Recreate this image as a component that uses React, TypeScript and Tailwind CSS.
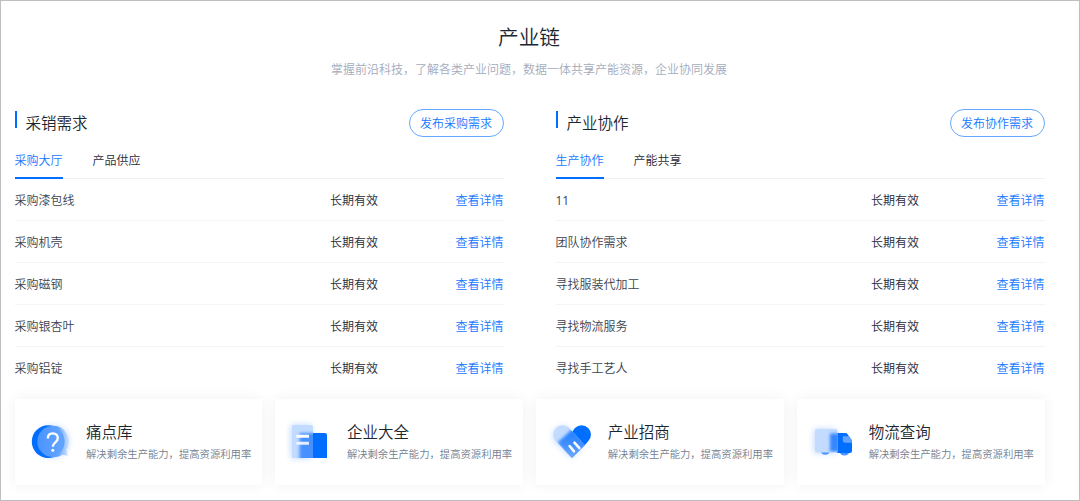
import clsx from "clsx";
import type { ReactNode } from "react";

interface Demand {
  title: string;
  validity: string;
}

interface DemandPanelProps {
  title: string;
  action: string;
  tabs: string[];
  rows: Demand[];
}

interface ServiceCardProps {
  title: string;
  icon: ReactNode;
}

const purchaseRows: Demand[] = [
  { title: "采购漆包线", validity: "长期有效" },
  { title: "采购机壳", validity: "长期有效" },
  { title: "采购磁钢", validity: "长期有效" },
  { title: "采购银杏叶", validity: "长期有效" },
  { title: "采购铝锭", validity: "长期有效" },
];

const cooperationRows: Demand[] = [
  { title: "11", validity: "长期有效" },
  { title: "团队协作需求", validity: "长期有效" },
  { title: "寻找服装代加工", validity: "长期有效" },
  { title: "寻找物流服务", validity: "长期有效" },
  { title: "寻找手工艺人", validity: "长期有效" },
];

function QuestionIcon() {
  return (
    <svg width="48" height="48" viewBox="0 0 48 48" className="shrink-0">
      <defs>
        <filter id="q-glow" x="-40%" y="-40%" width="180%" height="180%">
          <feGaussianBlur stdDeviation="3" />
        </filter>
        <linearGradient id="q-front" x1="0" x2="1">
          <stop offset="0" stopColor="#4a94ff" />
          <stop offset="0.65" stopColor="#5ea1ff" />
          <stop offset="1" stopColor="#a9cdff" stopOpacity="0.45" />
        </linearGradient>
      </defs>
      <circle cx="27" cy="23.5" r="15.5" fill="#8fbcff" opacity="0.6" filter="url(#q-glow)" />
      <circle cx="22.2" cy="23.6" r="16.4" fill="#006eff" />
      <path d="M27 7.8a15.6 15.6 0 0 1 13.2 24l1.8 6-5.5-1A15.8 15.8 0 0 1 27 39.2a15.7 15.7 0 0 1 0-31.4z" fill="url(#q-front)" />
      <path
        d="M21.8 20.5c0-3.3 2.1-5.2 5-5.2s5 1.9 5 4.8c0 4.3-5 4.2-5 8.7"
        fill="none"
        stroke="#fff"
        strokeWidth="2.3"
      />
      <circle cx="26.8" cy="32.2" r="1.5" fill="#fff" />
    </svg>
  );
}

function CompanyIcon() {
  return (
    <svg width="48" height="48" viewBox="0 0 48 48" className="shrink-0">
      <defs>
        <filter id="c-glow" x="-40%" y="-40%" width="180%" height="180%">
          <feGaussianBlur stdDeviation="3" />
        </filter>
        <filter id="c-soft" x="-30%" y="-30%" width="160%" height="160%">
          <feGaussianBlur stdDeviation="1.8" />
        </filter>
        <clipPath id="c-clip">
          <path d="M8 7h17a2 2 0 0 1 2 2v31H6V9a2 2 0 0 1 2-2z" />
        </clipPath>
      </defs>
      <rect x="5" y="7" width="20" height="33" fill="#a5caff" opacity="0.75" filter="url(#c-glow)" />
      <path d="M26.5 15H38.8a2.2 2.2 0 0 1 2.2 2.2V40H26.5z" fill="#006eff" />
      <g clipPath="url(#c-clip)">
        <rect x="5" y="6" width="23" height="35" fill="#c2dbff" />
        <rect x="13.5" y="15" width="20" height="32" fill="#4690ff" filter="url(#c-soft)" />
      </g>
      <rect x="10.5" y="16.8" width="12.5" height="3" rx="0.5" fill="#fff" />
      <rect x="10.5" y="23.8" width="12.5" height="3" rx="0.5" fill="#fff" opacity="0.85" />
    </svg>
  );
}

function HeartIcon() {
  return (
    <svg width="48" height="48" viewBox="0 0 48 48" className="shrink-0">
      <defs>
        <filter id="h-glow" x="-40%" y="-40%" width="180%" height="180%">
          <feGaussianBlur stdDeviation="3" />
        </filter>
        <filter id="h-soft" x="-30%" y="-30%" width="160%" height="160%">
          <feGaussianBlur stdDeviation="1.5" />
        </filter>
        <clipPath id="h-clip">
          <path d="M9 10a9.2 9.2 0 0 1 13.2 0L37.8 27.3 25 40.3 9 23.2a9.3 9.3 0 0 1 0-13.2z" />
        </clipPath>
        <linearGradient id="h-front" x1="0" y1="0" x2="0" y2="1">
          <stop offset="0" stopColor="#1f7dff" />
          <stop offset="0.5" stopColor="#4391ff" />
          <stop offset="1" stopColor="#7db3ff" />
        </linearGradient>
      </defs>
      <path d="M9 11a9 9 0 0 1 13 0l14 16-11 13L8 24a9 9 0 0 1 1-13z" fill="#a5caff" opacity="0.65" filter="url(#h-glow)" />
      <path d="M28 10a9.3 9.3 0 0 1 13.2 0 9.3 9.3 0 0 1 0 13.2L37.5 27.5 25 14z" fill="#006eff" />
      <g clipPath="url(#h-clip)">
        <rect x="4" y="5" width="40" height="37" fill="#c2dbff" />
        <path d="M25.5 11 10.5 24.5 25 44l18-17z" fill="url(#h-front)" filter="url(#h-soft)" />
      </g>
      <path d="M22.6 28l4.4 5.4M27.4 24.6l5 5.6" stroke="#fff" strokeWidth="2.5" strokeLinecap="round" />
    </svg>
  );
}

function TruckIcon() {
  return (
    <svg width="48" height="48" viewBox="0 0 48 48" className="shrink-0">
      <defs>
        <filter id="t-glow" x="-40%" y="-40%" width="180%" height="180%">
          <feGaussianBlur stdDeviation="3" />
        </filter>
        <filter id="t-soft" x="-60%" y="-40%" width="220%" height="180%">
          <feGaussianBlur stdDeviation="1.5" />
        </filter>
        <clipPath id="t-clip">
          <path d="M9 11h18.5a2 2 0 0 1 2 2v21.5H9a2 2 0 0 1-2-2V13a2 2 0 0 1 2-2z" />
        </clipPath>
      </defs>
      <rect x="6" y="11" width="22" height="24" fill="#a5caff" opacity="0.7" filter="url(#t-glow)" />
      <path d="M13 34h8.5a4.3 3.2 0 0 1-8.5 0z" fill="#4c95ff" />
      <path d="M32 34h9a4.5 3.4 0 0 1-9 0z" fill="#4c95ff" />
      <path d="M29 15h8.5a2 2 0 0 1 1.7.8l4.8 6.7V33a2 2 0 0 1-2 2H29z" fill="#006eff" />
      <path d="M34.8 18.2h5.8l3.4 4.8v1.8h-7.2a2 2 0 0 1-2-2z" fill="#62a3ff" />
      <g clipPath="url(#t-clip)">
        <rect x="6" y="10" width="25" height="26" fill="#c2dbff" />
        <rect x="22" y="15.5" width="14" height="18" fill="#3486ff" filter="url(#t-soft)" />
      </g>
    </svg>
  );
}

function DemandPanel({ title, action, tabs, rows }: DemandPanelProps) {
  return (
    <section className="w-[489px]">
      <header className="flex h-7 justify-between">
        <div className="flex">
          <span className="mt-0.5 h-[17px] w-0.5 bg-[#006eff]" />
          <h2 className="ml-[9px] text-[15.5px] leading-[26px] text-[#1b2730]">{title}</h2>
        </div>
        <button
          type="button"
          className="h-7 w-[95px] rounded-full border border-[#66a8ff] text-xs text-[#1677ff]"
        >
          {action}
        </button>
      </header>

      <nav className="mt-[9px] flex h-[33px] gap-[30px] border-b border-[#eef0f2]">
        {tabs.map((tab, index) => (
          <button
            key={tab}
            type="button"
            className={clsx(
              "h-[33px] border-b-2 pb-1 text-xs",
              index === 0
                ? "border-[#006eff] text-[#1677ff]"
                : "border-transparent text-[#1f2a38]",
            )}
          >
            {tab}
          </button>
        ))}
      </nav>

      <ul>
        {rows.map((row) => (
          <li
            key={row.title}
            className="flex h-[42px] items-center border-b border-[#f3f4f6] text-xs text-[#3a4350] last:border-b-0"
          >
            <span
              className={clsx(
                "w-[315.5px] pt-0.5 font-['Open_Sans','Noto_Sans_CJK_SC',sans-serif]",
                /^\d+$/.test(row.title) && "font-normal",
              )}
            >
              {row.title}
            </span>
            <span className="text-[#1f2a38]">{row.validity}</span>
            <a className="ml-auto text-[#1677ff]">查看详情</a>
          </li>
        ))}
      </ul>
    </section>
  );
}

function ServiceCard({ title, icon }: ServiceCardProps) {
  return (
    <div className="flex h-[86px] items-center bg-white pl-[11px] shadow-[0_0_14px_rgba(20,40,60,0.06)]">
      {icon}
      <div className="ml-[12.5px] whitespace-nowrap">
        <h3 className="-mt-px mb-px text-[15.5px] leading-6 text-[#1b2730]">{title}</h3>
        <p className="text-[10.33px] leading-5 text-[#727d8e]">
          解决剩余生产能力，提高资源利用率
        </p>
      </div>
    </div>
  );
}

export default function App() {
  return (
    <main className="h-[501px] w-[1080px] overflow-hidden border border-[#bfbfbf] bg-white pl-[13.5px] font-['Noto_Sans_CJK_SC',sans-serif] font-[350]">
      <div className="w-[1030px]">
        <div className="-ml-px pt-[19px] text-center">
          <h1 className="text-[20.7px] leading-8 text-[#1b2730]">产业链</h1>
          <p className="mt-[7px] text-xs leading-5 text-[#a3abbc]">
            掌握前沿科技，了解各类产业问题，数据一体共享产能资源，企业协同发展
          </p>
        </div>

        <div className="mt-[30px] flex justify-between">
          <DemandPanel
            title="采销需求"
            action="发布采购需求"
            tabs={["采购大厅", "产品供应"]}
            rows={purchaseRows}
          />
          <DemandPanel
            title="产业协作"
            action="发布协作需求"
            tabs={["生产协作", "产能共享"]}
            rows={cooperationRows}
          />
        </div>

        <div className="mt-[10px] grid grid-cols-4 gap-x-[13.5px]">
          <ServiceCard title="痛点库" icon={<QuestionIcon />} />
          <ServiceCard title="企业大全" icon={<CompanyIcon />} />
          <ServiceCard title="产业招商" icon={<HeartIcon />} />
          <ServiceCard title="物流查询" icon={<TruckIcon />} />
        </div>
      </div>
    </main>
  );
}
